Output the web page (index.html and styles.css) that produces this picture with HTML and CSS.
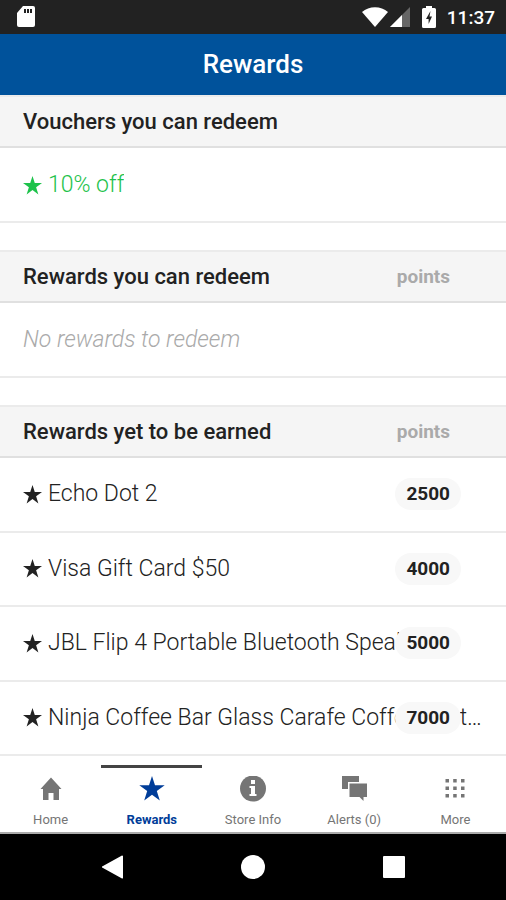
FILE: index.html
```html
<!DOCTYPE html>
<html lang="en">

<head>
    <meta charset="UTF-8">
    <meta name="viewport" content="width=device-width, initial-scale=1.0">
    <title>Rewards</title>
    <link rel="stylesheet" href="styles.css">
</head>

<body>
    <div class="status-bar">
        <svg class="sd-card" width="18" height="22" viewBox="0 0 18 22">
            <path fill="#fff" d="M6 0h10a2 2 0 0 1 2 2v17a2 2 0 0 1-2 2H2a2 2 0 0 1-2-2V7z" />
            <path stroke="#222" stroke-width="2" d="M8 3v4M11 3v4M14 3v4" />
        </svg>
        <div class="status-icons">
            <svg width="26" height="20" viewBox="0 0 26 20">
                <path fill="#fff" d="M13 20 0 5C7-1.500 19-1.500 26 5z" />
            </svg>
            <svg width="20" height="20" viewBox="0 0 20 20">
                <path fill="#666" d="M20 0v20H0z" />
                <path fill="#fff" d="M12 8v12H0z" />
            </svg>
            <svg class="battery" width="14" height="22" viewBox="0 0 14 22">
                <path fill="#fff" d="M4 0h6v2h2.500A1.500 1.500 0 0 1 14 3.500v17a1.500 1.500 0 0 1-1.500 1.500h-11A1.500 1.500 0 0 1 0 20.500v-17A1.500 1.500 0 0 1 1.500 2H4z" />
                <path fill="#222" d="M8.500 5 4 13h2.600v5L10 10.500H7.500z" />
            </svg>
            <span class="clock">11:37</span>
        </div>
    </div>

    <header>
        <h1>Rewards</h1>
    </header>

    <main>
        <section>
            <div class="section-head">
                <h2>Vouchers you can redeem</h2>
            </div>
            <ul>
                <li class="voucher">
                    <svg class="star" viewBox="0 0 20 20"><path d="M10 0l2.400 7.400H20l-6.200 4.500 2.400 7.500L10 14.800l-6.200 4.600 2.400-7.500L0 7.400h7.600z" /></svg>
                    <span class="name">10% off</span>
                </li>
            </ul>
        </section>

        <section>
            <div class="section-head">
                <h2>Rewards you can redeem</h2>
                <span class="points-label">points</span>
            </div>
            <ul>
                <li class="empty">No rewards to redeem</li>
            </ul>
        </section>

        <section class="to-earn">
            <div class="section-head">
                <h2>Rewards yet to be earned</h2>
                <span class="points-label">points</span>
            </div>
            <ul>
                <li>
                    <svg class="star" viewBox="0 0 20 20"><path d="M10 0l2.400 7.400H20l-6.200 4.500 2.400 7.500L10 14.800l-6.200 4.600 2.400-7.500L0 7.400h7.600z" /></svg>
                    <span class="name">Echo Dot 2</span>
                    <span class="badge">2500</span>
                </li>
                <li>
                    <svg class="star" viewBox="0 0 20 20"><path d="M10 0l2.400 7.400H20l-6.200 4.500 2.400 7.500L10 14.800l-6.200 4.600 2.400-7.500L0 7.400h7.600z" /></svg>
                    <span class="name">Visa Gift Card $50</span>
                    <span class="badge">4000</span>
                </li>
                <li>
                    <svg class="star" viewBox="0 0 20 20"><path d="M10 0l2.400 7.400H20l-6.200 4.500 2.400 7.500L10 14.800l-6.200 4.600 2.400-7.500L0 7.400h7.600z" /></svg>
                    <span class="name">JBL Flip 4 Portable Bluetooth Speaker</span>
                    <span class="badge">5000</span>
                </li>
                <li>
                    <svg class="star" viewBox="0 0 20 20"><path d="M10 0l2.400 7.400H20l-6.200 4.500 2.400 7.500L10 14.800l-6.200 4.600 2.400-7.500L0 7.400h7.600z" /></svg>
                    <span class="name">Ninja Coffee Bar Glass Carafe Coffee System</span>
                    <span class="badge">7000</span>
                </li>
            </ul>
        </section>
    </main>

    <nav class="tabs">
        <a href="#home">
            <svg viewBox="0 0 28 28"><path d="M14 1.500 3.500 13H6v11h5.500v-7h5v7H22V13h2.500z" /></svg>
            Home
        </a>
        <a href="#rewards" class="active">
            <svg viewBox="0 0 28 28"><path d="M14 0l3 9.300h9.700l-7.900 5.700 3 9.500-7.800-5.800L6.200 24.500l3-9.500-7.900-5.700H11z" /></svg>
            Rewards
        </a>
        <a href="#store">
            <svg viewBox="0 0 28 28">
                <circle cx="14" cy="12.500" r="13" />
                <path fill="#fff" d="M12 4h4v4h-4zM10.500 10H16v8h1.500v2h-7v-2H12v-6h-1.500z" />
            </svg>
            Store Info
        </a>
        <a href="#alerts">
            <svg viewBox="0 0 28 28">
                <path d="M2 0h17v6H8v7H2z" />
                <path d="M9.500 7.500H27V21h-3.500v4L19.500 21h-10z" />
            </svg>
            Alerts (0)
        </a>
        <a href="#more">
            <svg viewBox="0 0 28 28">
                <path d="M4.500 3H8v3.500H4.500zM12.200 3h3.500v3.500h-3.500zM20 3h3.500v3.500H20zM4.500 10.500H8V14H4.500zM12.200 10.500h3.500V14h-3.500zM20 10.500h3.500V14H20zM4.500 18H8v3.500H4.500zM12.200 18h3.500v3.500h-3.500zM20 18h3.500v3.500H20z" />
            </svg>
            More
        </a>
    </nav>

    <div class="system-bar">
        <button type="button" aria-label="Back">
            <svg viewBox="0 0 24 24"><path d="M23 1v22a1 1 0 0 1-1 .5L3 13a1 1 0 0 1 0-2L22 .5a1 1 0 0 1 1 .5z" /></svg>
        </button>
        <button type="button" aria-label="Home">
            <svg viewBox="0 0 24 24"><circle cx="12" cy="12" r="12" /></svg>
        </button>
        <button type="button" aria-label="Recent apps">
            <svg viewBox="0 0 24 24"><rect x="1" y="1" width="22" height="22" rx="1" /></svg>
        </button>
    </div>
</body>

</html>
```
FILE: styles.css
```css
* {
    box-sizing: border-box;
    margin: 0;
    padding: 0;
}

body {
    display: flex;
    flex-direction: column;
    min-height: 100vh;
    background: #fff;
    color: #222;
    font-family: Roboto, "Liberation Sans", sans-serif;
}

.status-bar {
    display: flex;
    justify-content: space-between;
    align-items: center;
    height: 34px;
    padding: 0 11px 0 17px;
    background: #222;
}

.status-icons {
    display: flex;
    align-items: center;
    gap: 2px;
}

.battery {
    margin: 0 9px 0 10px;
}

.clock {
    color: #fff;
    font-size: 19px;
    font-weight: 500;
}

header {
    padding: 15px 0 16px;
    background: #00529b;
    text-align: center;
}

h1 {
    color: #fff;
    font-size: 26px;
    font-weight: 500;
    line-height: 30px;
}

main {
    display: flex;
    flex-direction: column;
    flex: 1;
    gap: 27px;
}

.section-head {
    display: flex;
    justify-content: space-between;
    align-items: center;
    padding: 12px 56px 11px 23px;
    border-top: 2px solid #ebebeb;
    border-bottom: 2px solid #e0e0e0;
    background: #f5f5f5;
}

h2 {
    font-size: 22px;
    font-weight: 500;
    line-height: 26px;
}

.points-label {
    color: #aaa;
    font-size: 19px;
    font-weight: 700;
    line-height: 26px;
}

ul {
    list-style: none;
}

li {
    display: flex;
    position: relative;
    align-items: center;
    padding: 24px 23px 23px;
    border-bottom: 2px solid #ebebeb;
    color: #222;
    font-size: 23px;
    font-weight: 300;
    line-height: 26px;
}

/* the last list takes up whatever height is left */
.to-earn,
.to-earn ul {
    display: flex;
    flex-direction: column;
    flex: 1;
}

.to-earn li {
    flex: 1;
    padding: 23px;
}

.star {
    flex: none;
    width: 19px;
    height: 19px;
    margin-right: 6px;
    fill: currentColor;
}

.name {
    overflow: hidden;
    text-overflow: ellipsis;
    white-space: nowrap;
}

.voucher {
    color: #1ec24b;
}

.empty {
    color: #aaa;
    font-style: italic;
}

.badge {
    position: absolute;
    right: 45px;
    padding: 3px 11px;
    border-radius: 16px;
    background: #f8f8f8;
    color: #222;
    font-size: 19px;
    font-weight: 700;
}

.tabs {
    display: flex;
    border-bottom: 2px solid #aaa;
}

.tabs a {
    display: flex;
    flex: 1;
    flex-direction: column;
    align-items: center;
    gap: 7px;
    margin-top: 9px;
    padding: 8px 0 4px;
    border-top: 3px solid transparent;
    color: #757575;
    font-size: 13px;
    line-height: 17px;
    text-decoration: none;
}

.tabs svg {
    width: 28px;
    height: 28px;
    fill: currentColor;
}

.tabs .active {
    border-color: #444;
    color: #003d99;
    font-weight: 700;
}

.system-bar {
    display: flex;
    justify-content: center;
    gap: 117px;
    padding: 21px 0;
    background: #000;
}

.system-bar button {
    width: 24px;
    height: 24px;
    border: none;
    background: none;
}

.system-bar svg {
    display: block;
    fill: #fff;
}
```
